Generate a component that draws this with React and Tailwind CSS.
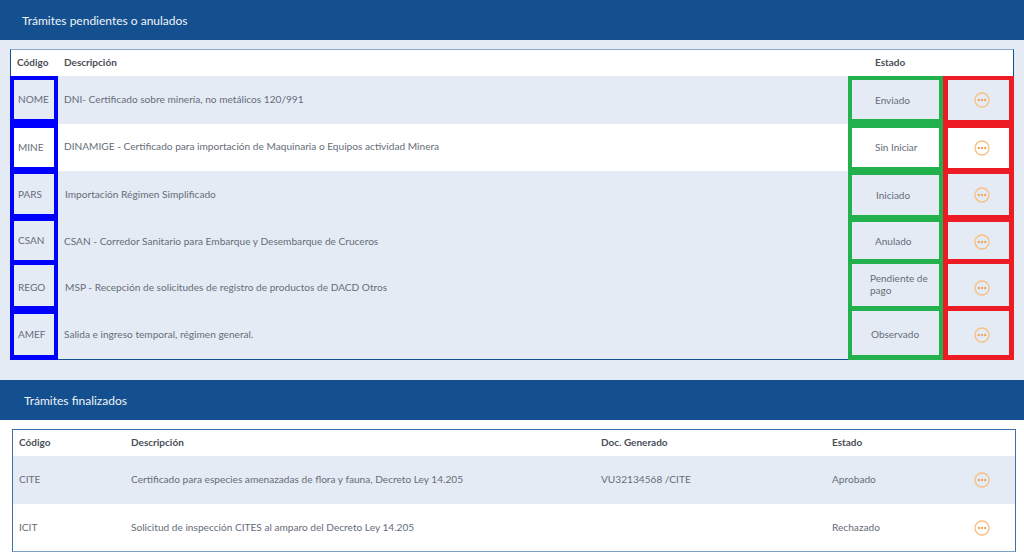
const pending = [
  {
    code: 'NOME', desc: 'DNI- Certificado sobre minería, no metálicos 120/991', status: 'Enviado', alt: true,
    h: 'h-[48px]', blue: 'border-t-4 border-b-[5px]', green: 'border-t-4 border-b-[5px]', red: 'border-t-4 border-b-4',
    statusPad: 'pl-[23px]', iconPad: '', descPad: '',
  },
  {
    code: 'MINE', desc: 'DINAMIGE - Certificado para importación de Maquinaria o Equipos actividad Minera', status: 'Sin Iniciar',
    h: 'h-[47px]', blue: 'border-t-4 border-b-4', green: 'border-t-4 border-b-4', red: 'border-t-4 border-b-[3px]',
    statusPad: 'pl-[23px] pb-px', iconPad: '', descPad: 'pb-px',
  },
  {
    code: 'PARS', desc: 'Importación Régimen Simplificado', status: 'Iniciado', alt: true, indent: 'pl-[7px]',
    h: 'h-[47px]', blue: 'border-t-[3px] border-b-4', green: 'border-t-4 border-b-[3px]', red: 'border-t-[3px] border-b-[3px]',
    statusPad: 'pl-[24px] pb-px', iconPad: '', descPad: '',
  },
  {
    code: 'CSAN', desc: 'CSAN - Corredor Sanitario para Embarque y Desembarque de Cruceros', status: 'Anulado', alt: true,
    h: 'h-[46px]', blue: 'border-t-[3px] border-b-4', green: 'border-t-4 border-b-[5px]', red: 'border-t-4 border-b-[5px]',
    statusPad: 'pl-[23px] pt-px', iconPad: 'pt-[2px]', descPad: 'pt-px',
  },
  {
    code: 'REGO', desc: 'MSP - Recepción de solicitudes de registro de productos de DACD Otros', status: 'Pendiente de pago', alt: true, indent: 'pl-[7px]',
    h: 'h-[46px]', blue: 'border-t border-b-4 pt-[3px]', green: 'border-t-0 border-b-4', red: 'border-t-0 border-b-4',
    statusPad: 'pl-[18px] pb-[2px]', iconPad: 'pt-[5px]', descPad: 'pt-px',
  },
  {
    code: 'AMEF', desc: 'Salida e ingreso temporal, régimen general.', status: 'Observado', alt: true, last: true,
    h: 'h-[50px]', blue: 'border-t-4 border-b-[5px]', green: 'border-t border-b-[5px]', red: 'border-t border-b-[5px]',
    statusPad: 'pl-[19px] pt-[2px]', iconPad: 'pt-1', descPad: '',
  },
];

const finished = [
  { code: 'CITE', desc: 'Certificado para especies amenazadas de flora y fauna, Decreto Ley 14.205', doc: 'VU32134568 /CITE', status: 'Aprobado', h: 'h-[48px]', alt: true },
  { code: 'ICIT', desc: 'Solicitud de inspección CITES al amparo del Decreto Ley 14.205', doc: '', status: 'Rechazado', h: 'h-[47px]' },
];

function DotsIcon() {
  return (
    <svg width="16" height="16" viewBox="0 0 16 16" className="shrink-0">
      <circle cx="8" cy="8" r="7" fill="none" stroke="#f8bf80" strokeWidth="1.3" />
      <circle cx="4.8" cy="8" r="1.2" fill="#f5a654" />
      <circle cx="8" cy="8" r="1.2" fill="#f5a654" />
      <circle cx="11.2" cy="8" r="1.2" fill="#f5a654" />
    </svg>
  );
}

function SectionBar({ title, indent }) {
  return (
    <div className={`h-10 pt-[2px] bg-[#14508f] flex items-center text-[12px] text-[#eef3f8] ${indent}`}>
      {title}
    </div>
  );
}

export default function App() {
  return (
    <div className="w-[1024px] h-[558px] overflow-hidden bg-[#e4ebf5] text-[10.15px] text-[#666d78] font-['Lato',sans-serif]">
      <SectionBar title="Trámites pendientes o anulados" indent="pl-[22px]" />

      <div className="pt-[9px] pl-[10px] pr-[10px] h-[340px]">
        <div className="h-[27px] pb-[2px] bg-white flex items-center font-bold text-[10px] text-[#4a4f57] border-t border-t-[#8aa8cf] border-x border-x-[#14508f]">
          <div className="w-[47px] pl-[6px] shrink-0">Código</div>
          <div className="flex-1 pl-[6px]">Descripción</div>
          <div className="w-[95px] pl-[27px] shrink-0">Estado</div>
          <div className="w-[70px] shrink-0" />
        </div>
        {pending.map((row) => (
          <div key={row.code} className={`flex ${row.h} ${row.alt ? 'bg-[#e4ebf5]' : 'bg-white'}`}>
            <div className={`w-[48px] shrink-0 border-x-4 border-[#0000ff] ${row.blue} flex items-center pl-[4px] text-[10px]`}>
              {row.code}
            </div>
            <div className={`flex-1 flex items-center ${row.indent || 'pl-[6px]'} ${row.descPad} ${row.last ? 'border-b border-b-[#14508f]' : ''}`}>
              {row.desc}
            </div>
            <div className={`w-[95px] shrink-0 border-x-4 border-[#22b14c] ${row.green} ${row.statusPad} flex items-center text-[10px] leading-[12px]`}>
              {row.status}
            </div>
            <div className={`w-[71px] shrink-0 border-x-[5px] border-[#ed1c24] ${row.red} flex items-center pl-[26px] ${row.iconPad}`}>
              <DotsIcon />
            </div>
          </div>
        ))}
      </div>

      <SectionBar title="Trámites finalizados" indent="pl-[24px]" />

      <div className="bg-white h-[138px] pt-[9px] pl-3 pr-[8px]">
        <div className="border border-[#3f6fa8] border-b-[#7f9fc7] h-[123px]">
          <div className="h-[26px] pb-[2px] flex items-center font-bold text-[10px] text-[#4a4f57]">
            <div className="w-[112px] pl-[6px]">Código</div>
            <div className="w-[470px] pl-[6px]">Descripción</div>
            <div className="w-[230px] pl-[6px]">Doc. Generado</div>
            <div className="flex-1 pl-[7px]">Estado</div>
          </div>
          {finished.map((row) => (
            <div key={row.code} className={`${row.h} flex items-center ${row.alt ? 'bg-[#e4ebf5]' : 'bg-white'}`}>
              <div className="w-[112px] pl-[6px]">{row.code}</div>
              <div className="w-[470px] pl-[6px]">{row.desc}</div>
              <div className="w-[230px] pl-[6px]">{row.doc}</div>
              <div className="w-[149px] pl-[7px]">{row.status}</div>
              <DotsIcon />
            </div>
          ))}
        </div>
      </div>
    </div>
  );
}
